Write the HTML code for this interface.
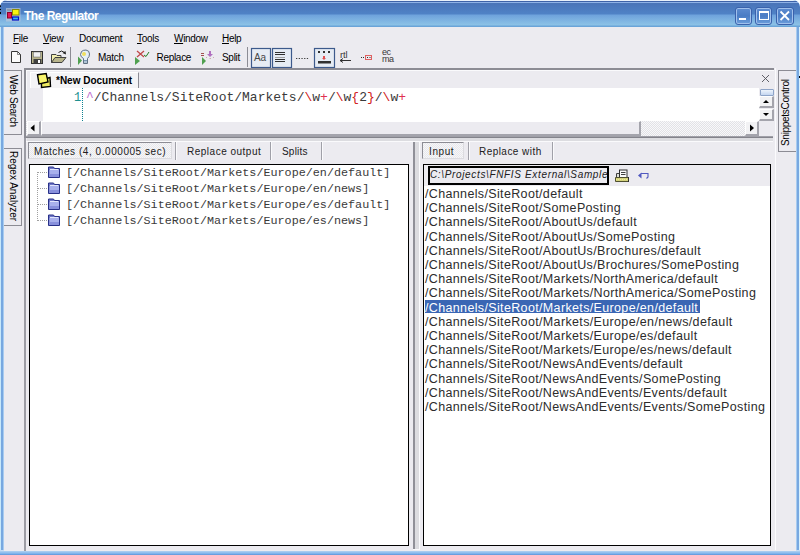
<!DOCTYPE html>
<html><head><meta charset="utf-8">
<style>
*{margin:0;padding:0;box-sizing:border-box}
html,body{width:800px;height:555px;overflow:hidden;background:#fff}
body{position:relative;font-family:"Liberation Sans",sans-serif;font-size:11px;color:#000}
.a{position:absolute}
#win{left:0;top:0;width:800px;height:555px;background:#7aaee6;border-radius:7px 7px 0 0;overflow:hidden}
#title{left:0;top:0;width:800px;height:27px;background:linear-gradient(#e8f0fa 0,#e8f0fa 1px,#3e62a8 1px,#3e62a8 2px,#8fb2e6 2px,#8fb2e6 3px,#4a74b8 3px,#4f82c6 14px,#6ea2dc 15px,#8cc2e6 25px,#6aa4d8 26px,#6aa4d8 27px);border-radius:7px 7px 0 0}
#client{left:4px;top:27px;width:792px;height:524px;background:#ecebf0}
.menu{top:33px;font-size:10px;letter-spacing:-0.3px}
.menu u{text-decoration:underline;text-decoration-thickness:1px;text-underline-offset:1px}
.tb{top:52px;font-size:10px;letter-spacing:-0.3px}
.vtab{background:#ecebf0;border:1px solid #8c8c94;border-left:none}
.wb{top:7px;width:17px;height:18px;border:1px solid #3a62ac;border-radius:3px;box-shadow:inset 0 0 0 1px #a0c0ec;background:linear-gradient(#5e8cd0,#4a7cc4 50%,#6c9edc)}
.rot{white-space:nowrap;transform-origin:0 0}
.btn{background:#f2f2f4;border-top:1px solid #fff;border-left:1px solid #fff;border-right:2px solid #a4a4ac;border-bottom:2px solid #a4a4ac}
.mono{font-family:"Liberation Mono",monospace}
.li{left:425px;font-size:12.5px;white-space:nowrap;height:14px;line-height:14px;letter-spacing:0.35px;color:#2c2c2c}
.tt{top:146px;font-size:10px;color:#202020}
.tr{left:66px;font-size:11.75px;white-space:nowrap;line-height:16px;height:16px;color:#3a3a3a}
</style></head><body>
<div id="win" class="a">
 <div id="title" class="a"></div>
 <!-- title icon -->
 <svg class="a" style="left:6px;top:8px" width="15" height="14" viewBox="0 0 15 14">
  <rect x="0" y="0" width="14.5" height="13.5" fill="#b8c8dc" opacity="0.7"/>
  <rect x="1" y="1" width="4.5" height="2" fill="#8898b0"/>
  <rect x="1.5" y="4.5" width="4" height="5.5" fill="#e01858" stroke="#900028" stroke-width="1"/>
  <rect x="6.5" y="1.5" width="6.5" height="5.5" fill="#f8f410" stroke="#8c8c00" stroke-width="1"/>
  <rect x="6.5" y="9" width="6" height="3" fill="#38b8f0" stroke="#0010c8" stroke-width="1.2"/>
 </svg>
 <div class="a" style="left:24px;top:9px;color:#fff;font-weight:bold;font-size:12px;letter-spacing:-0.5px">The Regulator</div>
 <!-- window buttons -->
 <div class="a wb" style="left:735px"></div>
 <div class="a" style="left:739px;top:18px;width:7px;height:2px;background:#fff"></div>
 <div class="a wb" style="left:755px"></div>
 <div class="a" style="left:759px;top:11px;width:10px;height:9px;border:1px solid #fff;border-top-width:2px"></div>
 <div class="a wb" style="left:776px;width:18px"></div>
 <svg class="a" style="left:776px;top:7px" width="18" height="18"><path d="M4.5 4.5 L13 13 M13 4.5 L4.5 13" stroke="#fff" stroke-width="1.8"/></svg>
 <div class="a" style="left:796px;top:27px;width:4px;height:528px;background:linear-gradient(90deg,#a8ccf0 0,#a8ccf0 1px,#78a8e0 1px,#78a8e0 3px,#d8f0fc 3px)"></div>
 <div class="a" style="left:0;top:27px;width:4px;height:528px;background:linear-gradient(90deg,#c8e8fa 0,#c8e8fa 1px,#78a8e0 1px,#78a8e0 3px,#a8ccf0 3px)"></div>
 <div class="a" style="left:0;top:550px;width:800px;height:5px;background:linear-gradient(#d4e4f6 0,#a8ccf0 1.5px,#80b4ec 3.5px,#5c94d8 5px)"></div>
 <div id="client" class="a"></div>
 <div class="a" style="left:0;top:5px;width:1px;height:2px;background:#000"></div><div class="a" style="left:799px;top:76px;width:1px;height:2px;background:#000"></div><div class="a" style="left:0;top:9px;width:1px;height:1px;background:#000"></div><div class="a" style="left:0;top:12px;width:1px;height:2px;background:#000"></div>

 <!-- menu -->
 <div class="a menu" style="left:13px"><u>F</u>ile</div>
 <div class="a menu" style="left:43px"><u>V</u>iew</div>
 <div class="a menu" style="left:79px">Document</div>
 <div class="a menu" style="left:137px"><u>T</u>ools</div>
 <div class="a menu" style="left:174px"><u>W</u>indow</div>
 <div class="a menu" style="left:222px"><u>H</u>elp</div>

 <!-- toolbar -->
 <svg class="a" style="left:0;top:44px" width="400" height="24" viewBox="0 44 400 24">
  <!-- new -->
  <path d="M11.5 51.5 H17.5 L20.5 54.5 V62.5 H11.5 Z" fill="#fbfbfb" stroke="#383838"/><path d="M17.5 51.5 V54.5 H20.5" fill="none" stroke="#383838" stroke-width="0.6"/>
  <!-- save -->
  <rect x="31.5" y="51.5" width="11" height="12" fill="#b8b48c" stroke="#303030"/>
  <rect x="33.5" y="52" width="7" height="5" fill="#f0f0f0" stroke="#606060" stroke-width="0.5"/>
  <rect x="33.5" y="59" width="8" height="4.5" fill="#404040"/>
  <rect x="38" y="60" width="2" height="3" fill="#fff"/>
  <!-- open -->
  <path d="M51.5 54.5 H56 L57 55.5 H61 V62.5 H51.5 Z" fill="#f2eeb0" stroke="#404040"/>
  <path d="M51.5 62.5 L55 57.5 H66 L62 62.5 Z" fill="#b8b48c" stroke="#404040"/>
  <path d="M58.5 52.5 Q61.5 49.5 64.5 52.5" fill="none" stroke="#202020"/>
  <path d="M62.5 53 L66 54.5 L65.5 51 Z" fill="#202020"/>
  <!-- separator -->
  <rect x="70" y="47" width="1" height="20" fill="#8c8c94"/>
  <!-- match bulb -->
  <path d="M81.5 51.5 Q83 50 86 50 Q89.5 50.5 89.5 54 Q89.5 57 87.5 58.5 V63.5 H83.5 V58.5 Q80.5 57 80.5 54.5 Z" fill="#e4f0f8" stroke="#607080"/>
  <circle cx="84" cy="54" r="2" fill="#f0e060"/>
  <path d="M83.5 60.5 H87.5 M83.5 62 H87.5" stroke="#6080a0" stroke-width="0.8"/>
  <path d="M78 56.5 L82 60.5 L78 65 Z" fill="#50a050"/>
  <!-- replace -->
  <path d="M137 51 L144 57 M144 51 L137 57" stroke="#c04848" stroke-width="1.3"/>
  <path d="M144 55 L146 56.5 L149 52" stroke="#208020" fill="none"/>
  <path d="M135 57 L140 61 L135 65 Z" fill="#50a050"/>
  <!-- split -->
  <path d="M201 53.5 H204 M201 55.5 H204" stroke="#a05050"/>
  <path d="M209 51 V54 H207 L210 57 L213 54 H211 V51 Z" fill="#b070c0"/>
  <path d="M206 57.5 H207 M209.5 58.5 H211 M213 57.5 H214" stroke="#c0a0a0" stroke-width="0.8"/>
  <path d="M202 57 L206 61 L202 65 Z" fill="#50a050"/>
  <!-- separator 2 -->
  <rect x="247" y="47" width="1" height="20" fill="#8c8c94"/>
  <!-- checked buttons -->
  <rect x="251.5" y="48.5" width="19" height="19" fill="#e6ecf4" stroke="#3d5a8c" stroke-width="1.2"/>
  <rect x="272.5" y="48.5" width="19" height="19" fill="#e6ecf4" stroke="#3d5a8c" stroke-width="1.2"/>
  <rect x="314.5" y="48.5" width="20" height="19" fill="#e6ecf4" stroke="#3d5a8c" stroke-width="1.2"/>
  <!-- list lines -->
  <path d="M275 52.5 H285 M275 54.5 H285 M275 59.5 H285 M275 61.5 H285" stroke="#303030"/><path d="M275 57.5 H285" stroke="#a0a0a0"/>
  <!-- dots -->
  <path d="M296 58.5 H309" stroke="#404040" stroke-dasharray="1.3 1.4"/>
  <!-- icon in button 3 -->
  <rect x="318" y="51" width="2" height="2" fill="#303030"/><rect x="323" y="51" width="2" height="2" fill="#303030"/><rect x="328" y="51" width="2" height="2" fill="#303030"/>
  <path d="M323 56 V58 H322 L324 60 L326 58 H325 V56 Z" fill="#e05050"/>
  <rect x="318" y="61" width="13" height="2.5" fill="#303030"/>
  <!-- rtl arrow -->
  <path d="M340 60.5 H351 M340 60.5 L343 58.5 M340 60.5 L343 62.5" stroke="#303030"/>
  <!-- red box -->
  <path d="M361 57.5 H362 M363 57.5 H364" stroke="#303030"/>
  <rect x="365.5" y="55.5" width="6" height="4" fill="none" stroke="#e06060"/>
  <path d="M367 57.5 H368 M369.5 57.5 H370.5" stroke="#303030"/>
 </svg>
 <div class="a tb" style="left:98px">Match</div>
 <div class="a tb" style="left:156.5px">Replace</div>
 <div class="a tb" style="left:222px">Split</div>
 <div class="a" style="left:254px;top:52px;font-size:10px;letter-spacing:-0.2px;color:#484848">Aa</div>
 <div class="a" style="left:340px;top:49px;font-size:9.5px;letter-spacing:-0.2px;color:#383838">rtl</div>
 <div class="a" style="left:382px;top:49px;font-size:9px;line-height:6.5px;letter-spacing:-0.4px;color:#383838">ec<br>ma</div>

 <!-- left autohide tabs -->
 <div class="a vtab" style="left:4px;top:70px;width:18px;height:65px"></div>
 <div class="a rot" style="left:19px;top:75px;transform:rotate(90deg);font-size:10px;letter-spacing:-0.3px">Web Search</div>
 <div class="a vtab" style="left:4px;top:148px;width:18px;height:78px"></div>
 <div class="a rot" style="left:19px;top:151px;transform:rotate(90deg);font-size:10px;letter-spacing:0px">Regex Analyzer</div>
 <!-- right autohide tab -->
 <div class="a" style="left:778px;top:70px;width:18px;height:82px;background:#ecebf0;border:1px solid #8c8c94;border-right:none"></div>
 <div class="a rot" style="left:780px;top:146px;transform:rotate(-90deg);font-size:10px;letter-spacing:-0.3px">SnippetsControl</div>
 <div class="a" style="left:775px;top:68px;width:1px;height:482px;background:#fbfbfd"></div>

 <!-- editor container -->
 <div class="a" style="left:24px;top:68px;width:750px;height:70px;border:2px solid #8c8c94;border-right:none;border-bottom:none;background:#ecebf0"></div>
 <div class="a" style="left:26px;top:70px;width:748px;height:66px;border-top:1px solid #fafafc;border-left:1px solid #fafafc"></div>
 <!-- doc tab -->
 <div class="a" style="left:30px;top:72px;width:109px;height:16px;background:#f4f4f6;border-right:1px solid #8c8c94;border-top:1px solid #fff;border-left:1px solid #fff"></div>
 <svg class="a" style="left:30px;top:70px" width="30" height="20" viewBox="30 70 30 20">
  <path d="M41.5 80 L50 77.5 L50.5 86.5 L41.5 87.5 Z" fill="#ece860" stroke="#000" stroke-width="1.4"/>
  <path d="M37.5 74.8 L46.2 73.5 L48 82 L39 84 Z" fill="#f4f050" stroke="#000" stroke-width="1.4"/>
  <path d="M39 76 L45.5 75 L46.8 81 L40.2 82.5 Z" fill="#f8f470"/>
 </svg>
 <div class="a" style="left:56px;top:75px;font-weight:bold;font-size:10px;letter-spacing:0px">*New Document</div>
 <svg class="a" style="left:760px;top:73px" width="11" height="11"><path d="M2 2 L9 9 M9 2 L2 9" stroke="#505058" stroke-width="0.9"/></svg>
 <!-- editor -->
 <div class="a" style="left:43px;top:88px;width:716px;height:33px;background:#fff"></div>
 <div class="a" style="left:82px;top:88px;width:1px;height:33px;border-left:1px dotted #108090"></div>
 <div class="a mono" style="left:74px;top:91px;font-size:12px;color:#209090">1</div>
 <div class="a mono" style="left:86px;top:90px;font-size:13px;white-space:pre;color:#3a3a3a"><span style="color:#c070d0">^</span>/Channels/SiteRoot/Markets/<span style="color:#d02020">\</span>w<span style="color:#e03050">+</span>/<span style="color:#d02020">\</span>w<span style="color:#d02020">{</span>2<span style="color:#d02020">}</span>/<span style="color:#d02020">\</span>w<span style="color:#e03050">+</span></div>
 <!-- v scroll -->
 <div class="a" style="left:759px;top:88px;width:14px;height:33px;background:#ecebf0"></div>
 <div class="a" style="left:760px;top:89px;width:14px;height:7px;background:linear-gradient(#eef4fc,#c4d6f0);border:1px solid #8ea4c8;border-radius:1px"></div>
 <div class="a btn" style="left:759px;top:96px;width:15px;height:12px"></div>
 <div class="a btn" style="left:759px;top:109px;width:15px;height:12px"></div>
 <svg class="a" style="left:759px;top:96px" width="15" height="26"><path d="M4 7 H10 L7 4 Z" fill="#000"/><path d="M4 17 H10 L7 20 Z" fill="#000"/></svg>
 <!-- h scroll -->
 <div class="a" style="left:26px;top:121px;width:733px;height:15px;background:repeating-conic-gradient(#f8f8fa 0 25%,#e2e2e6 0 50%) 0 0/2px 2px"></div>
 <div class="a btn" style="left:27px;top:121px;width:14px;height:15px"></div>
 <div class="a btn" style="left:41px;top:121px;width:600px;height:15px;background:#ecebf0"></div>
 <div class="a btn" style="left:745px;top:121px;width:14px;height:15px"></div>
 <svg class="a" style="left:27px;top:121px" width="732" height="15"><path d="M3.5 7 L7.5 3.5 V10.5 Z" fill="#000"/><path d="M727 7 L723 3.5 V10.5 Z" fill="#000"/></svg>
 <div class="a" style="left:26px;top:136px;width:747px;height:1px;background:#a0a0a8"></div>
 <div class="a" style="left:26px;top:137px;width:747px;height:1px;background:#84848c"></div>
 <div class="a" style="left:27px;top:138px;width:746px;height:3px;background:#dcdce0"></div>
 <div class="a" style="left:26px;top:141px;width:747px;height:1px;background:#fafafc"></div>

 <!-- lower left panel -->
 <div class="a" style="left:24px;top:138px;width:2px;height:413px;background:#9c9ca4"></div>
 <div class="a" style="left:28px;top:142px;width:144px;height:17px;background:repeating-conic-gradient(#f6f6f8 0 25%,#e8e8ec 0 50%) 0 0/2px 2px;border:1px solid #8c8c94;border-right-color:#dcdce0;border-bottom-color:#dcdce0"></div>
 <div class="a tt" style="left:34px;letter-spacing:0.55px">Matches (4, 0.000005 sec)</div>
 <div class="a" style="left:175px;top:142px;width:2px;height:18px;border-left:1px solid #a0a0a8;background:#fafafc"></div>
 <div class="a tt" style="left:187px;letter-spacing:0.5px">Replace output</div>
 <div class="a" style="left:270px;top:142px;width:2px;height:18px;border-left:1px solid #a0a0a8;background:#fafafc"></div>
 <div class="a tt" style="left:282px;letter-spacing:0.2px">Splits</div>
 <div class="a" style="left:321px;top:142px;width:2px;height:18px;border-left:1px solid #a0a0a8;background:#fafafc"></div>
 <div class="a" style="left:29px;top:164px;width:380px;height:382px;background:#fff;border:1px solid #000"></div>
 <!-- tree -->
 <svg class="a" style="left:29px;top:164px" width="40" height="70" viewBox="29 164 40 70">
  <path d="M37.5 172 V221.5 M38 172.5 H47 M38 188.5 H47 M38 204.5 H47 M38 220.5 H47" stroke="#a0a0a0" stroke-dasharray="1 1" fill="none"/>
  <g id="fld"><path d="M48.5 167 H53.5 L54.5 168.5 H59.5 V177.5 H48.5 Z" fill="#7078c8" stroke="#283088"/><path d="M49.5 170 H59 V177 H49.5 Z" fill="#a8b0ec"/><path d="M50 169.5 H58.5" stroke="#e0e4fc"/><path d="M49.5 174 H59 V177 H49.5 Z" fill="#8890dc"/></g>
  <use href="#fld" y="16"/><use href="#fld" y="32"/><use href="#fld" y="48"/>
 </svg>
 <div class="a mono tr" style="top:165px">[/Channels/SiteRoot/Markets/Europe/en/default]</div>
 <div class="a mono tr" style="top:181px">[/Channels/SiteRoot/Markets/Europe/en/news]</div>
 <div class="a mono tr" style="top:197px">[/Channels/SiteRoot/Markets/Europe/es/default]</div>
 <div class="a mono tr" style="top:213px">[/Channels/SiteRoot/Markets/Europe/es/news]</div>

 <!-- splitter -->
 <div class="a" style="left:413px;top:142px;width:2px;height:407px;background:#909098"></div>
 <div class="a" style="left:415px;top:142px;width:4px;height:407px;background:#dcdce0"></div><div class="a" style="left:413px;top:549px;width:6px;height:1px;background:#fafafc"></div>
 <div class="a" style="left:419px;top:142px;width:1px;height:408px;background:#fafafc"></div>

 <!-- lower right panel -->
 <div class="a" style="left:422px;top:142px;width:42px;height:17px;background:repeating-conic-gradient(#f6f6f8 0 25%,#e8e8ec 0 50%) 0 0/2px 2px;border:1px solid #8c8c94;border-right-color:#dcdce0;border-bottom-color:#dcdce0"></div>
 <div class="a tt" style="left:429px;letter-spacing:0.6px">Input</div>
 <div class="a" style="left:468px;top:142px;width:2px;height:18px;border-left:1px solid #a0a0a8;background:#fafafc"></div>
 <div class="a tt" style="left:479px;letter-spacing:0.45px">Replace with</div>
 <div class="a" style="left:552px;top:142px;width:2px;height:18px;border-left:1px solid #a0a0a8;background:#fafafc"></div>
 <div class="a" style="left:423px;top:164px;width:348px;height:382px;background:#fff;border:1px solid #000"></div>
 <div class="a" style="left:424px;top:165px;width:346px;height:21px;background:#ecebf0"></div>
 <div class="a" style="left:428px;top:166px;width:181px;height:19px;background:#ecebf0;border:2px solid #000;overflow:hidden"></div>
 <div class="a" style="left:430px;top:169px;width:177px;overflow:hidden;white-space:nowrap;font-style:italic;font-size:10px;letter-spacing:0.65px;color:#202020">C:\Projects\FNFIS External\Samples</div>
 <svg class="a" style="left:612px;top:168px" width="40" height="16" viewBox="612 168 40 16">
  <path d="M616.5 173.5 H619.5 V178 H616.5 Z" fill="#e0e0d8" stroke="#404040"/>
  <rect x="619.5" y="170" width="7.5" height="7.5" fill="#fafafa" stroke="#303030"/>
  <path d="M621 172.5 H625.5 M621 174.5 H625.5" stroke="#404040"/>
  <path d="M615.5 177.5 H628.5 V181.5 H615.5 Z" fill="#d4d27c" stroke="#505030"/>
  <path d="M616 179.5 H628" stroke="#eeee98" stroke-dasharray="1 1"/>
  <path d="M628.5 177 V182" stroke="#303030"/>
  <path d="M638 175.5 L641.5 172.5 V178.5 Z" fill="#5058c0"/>
  <path d="M641 173.5 H648 V177 L646.5 178.5" stroke="#5058c0" stroke-width="1.1" fill="none"/>
 </svg>
 <div class="a li" style="top:187px">/Channels/SiteRoot/default</div>
 <div class="a li" style="top:201px">/Channels/SiteRoot/SomePosting</div>
 <div class="a li" style="top:215px">/Channels/SiteRoot/AboutUs/default</div>
 <div class="a li" style="top:230px">/Channels/SiteRoot/AboutUs/SomePosting</div>
 <div class="a li" style="top:244px">/Channels/SiteRoot/AboutUs/Brochures/default</div>
 <div class="a li" style="top:258px">/Channels/SiteRoot/AboutUs/Brochures/SomePosting</div>
 <div class="a li" style="top:272px">/Channels/SiteRoot/Markets/NorthAmerica/default</div>
 <div class="a li" style="top:286px">/Channels/SiteRoot/Markets/NorthAmerica/SomePosting</div>
 <div class="a" style="left:425px;top:300px;width:275px;height:13px;background:#3a66b4"></div>
 <div class="a li" style="top:301px;color:#fff">/Channels/SiteRoot/Markets/Europe/en/default</div>
 <div class="a li" style="top:315px">/Channels/SiteRoot/Markets/Europe/en/news/default</div>
 <div class="a li" style="top:329px">/Channels/SiteRoot/Markets/Europe/es/default</div>
 <div class="a li" style="top:343px">/Channels/SiteRoot/Markets/Europe/es/news/default</div>
 <div class="a li" style="top:357px">/Channels/SiteRoot/NewsAndEvents/default</div>
 <div class="a li" style="top:372px">/Channels/SiteRoot/NewsAndEvents/SomePosting</div>
 <div class="a li" style="top:386px">/Channels/SiteRoot/NewsAndEvents/Events/default</div>
 <div class="a li" style="top:400px">/Channels/SiteRoot/NewsAndEvents/Events/SomePosting</div>
</div>
</body></html>
